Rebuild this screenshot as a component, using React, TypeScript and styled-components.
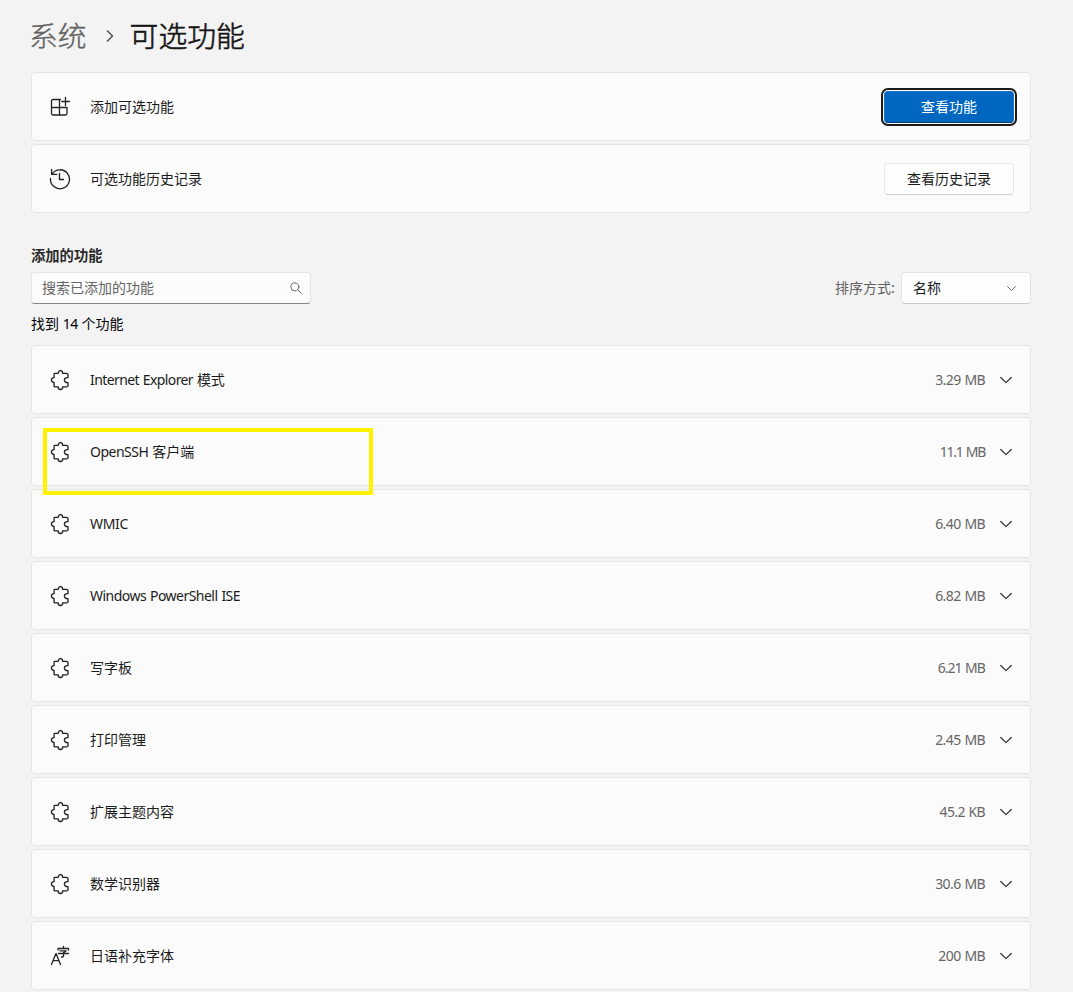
import React from "react";
import styled, { createGlobalStyle } from "styled-components";

const GlobalStyle = createGlobalStyle`
  * { box-sizing: border-box; }
  html, body { margin: 0; background: #f3f3f3; }
  body {
    height: 992px;
    overflow: hidden;
    font-family: "Noto Sans CJK SC", sans-serif;
    font-size: 14px;
    line-height: 20px;
    color: #1b1b1b;
  }
  button { font: inherit; }
`;

const Page = styled.main`
  width: 1031px;
  padding: 15px 0 0 31px;
`;

const Breadcrumb = styled.h1`
  display: flex;
  align-items: center;
  height: 40px;
  margin: 0 0 17px -2px;
  font-size: 28.8px;
  line-height: 40px;
  font-weight: 300;
`;

const Crumb = styled.span<{ $current?: boolean }>`
  color: ${(p) => (p.$current ? "#161616" : "#626262")};
  -webkit-text-stroke: ${(p) => (p.$current ? 0.6 : 0.35)}px currentColor;
`;

const CrumbArrow = styled.svg`
  width: 10px;
  height: 14px;
  margin: 2px 16px 0 17px;
`;

const Stack = styled.div`
  display: flex;
  flex-direction: column;
  gap: 3px;
`;

const Card = styled.section<{ $action?: boolean }>`
  display: flex;
  align-items: center;
  height: 69px;
  padding: 0 ${(p) => (p.$action ? 16 : 18)}px 0 18px;
  background: #fbfbfb;
  border: 1px solid #e5e5e5;
  border-radius: 4px;
`;

const CardIcon = styled.svg`
  width: 22px;
  height: 22px;
  margin: 0 19px 0 -1px;
  flex: none;
  fill: none;
  stroke: #222;
  stroke-width: 1.3;
  stroke-linecap: round;
  stroke-linejoin: round;
`;

const Label = styled.span<{ $raised?: boolean }>`
  flex: 1;
  padding-bottom: ${(p) => (p.$raised ? 2 : 0)}px;
  white-space: pre;
`;

const Latin = styled.span<{ $spacing?: number }>`
  font-family: "Noto Sans", "Open Sans", sans-serif;
  font-size: 14px;
  letter-spacing: ${(p) => p.$spacing ?? -0.6}px;
  word-spacing: 0.8px;
`;

const Size = styled(Latin)`
  margin-right: 15px;
  color: #666;
`;

const Button = styled.button<{ $primary?: boolean }>`
  width: 130px;
  height: 32px;
  padding: 0 0 1px;
  border-radius: 4px;
  border: 1px solid ${(p) => (p.$primary ? "#1470c5" : "#e8e8e8")};
  border-bottom-color: ${(p) => (p.$primary ? "#003e73" : "#cfcfcf")};
  background: ${(p) => (p.$primary ? "#0067c0" : "#fefefe")};
  color: ${(p) => (p.$primary ? "#fff" : "#1b1b1b")};
  box-shadow: ${(p) => (p.$primary ? "0 0 0 1px #fff, 0 0 0 3px #1a1a1a" : "none")};
`;

const Heading = styled.h2`
  margin: 32px 0 7px;
  font-size: 14.3px;
  line-height: 20px;
  font-weight: 700;
  color: #2b2b2b;
`;

const Toolbar = styled.div`
  display: flex;
  justify-content: space-between;
  height: 32px;
`;

const Search = styled.div`
  display: flex;
  align-items: center;
  justify-content: space-between;
  width: 280px;
  padding: 0 8px 1px 10px;
  background: #fcfcfc;
  border: 1px solid #e5e5e5;
  border-bottom-color: #868686;
  border-radius: 4px;
  color: #646464;
`;

const FieldText = styled.span`
  padding-bottom: 2px;
`;

const Sort = styled.div`
  display: flex;
  align-items: center;
  gap: 6px;
  color: #616161;
`;

const Select = styled.div`
  display: flex;
  align-items: center;
  justify-content: space-between;
  width: 130px;
  height: 32px;
  padding: 0 14px 0 11px;
  background: #fdfdfd;
  border: 1px solid #e5e5e5;
  border-bottom-color: #cccccc;
  border-radius: 4px;
  color: #1b1b1b;
`;

const Count = styled.p`
  height: 20px;
  margin: 9px 0 12px;
  color: #000;
`;

const Highlight = styled.div`
  position: absolute;
  left: 43px;
  top: 428px;
  width: 330px;
  height: 67px;
  border: 4px solid #fff200;
  border-radius: 1px;
`;

const Chevron = ({ size = 12, color = "#333" }: { size?: number; color?: string }) => (
  <svg width={size} height={size} viewBox="0 0 12 12" fill="none" stroke={color} strokeWidth="1.2" strokeLinecap="round" strokeLinejoin="round">
    <path d="M.8 3.5 6 8.7l5.2-5.2" />
  </svg>
);

const AddIcon = () => (
  <CardIcon viewBox="0 0 22 22">
    <path d="M11.5 3.5H4A1.5 1.5 0 0 0 2.5 5v12.5A1.5 1.5 0 0 0 4 19h12.5a1.5 1.5 0 0 0 1.5-1.5v-6H2.5M10.5 3.5V19M16.5 1.5v8M12.8 5.5h7.7" />
  </CardIcon>
);

const HistoryIcon = () => (
  <CardIcon viewBox="0 0 22 22">
    <path d="M2.6 1.3v5.1h5.2M3 6.1A9.5 9.5 0 1 1 1.5 10.5M10.5 5.5v6h4" />
  </CardIcon>
);

const PuzzleIcon = () => (
  <CardIcon viewBox="0 0 22 22">
    <path d="M5.7 4.3H9.2C9.2 2.6 10.2 1.7 11.4 1.7S13.6 2.6 13.6 4.3H17.6Q19 4.3 19 5.7V8.6C16.9 8.3 15.4 9.4 15.4 11.1S16.9 13.9 19 13.6V16.5Q19 17.9 17.6 17.9H13.6C13.6 19.5 12.6 20.5 11.4 20.5S9.2 19.5 9.2 17.9H5.7Q5.1 17.9 5.1 17.3V13.5C3.4 13.5 2.4 12.5 2.4 11.1S3.4 8.7 5.1 8.7V4.9Q5.1 4.3 5.7 4.3Z" />
  </CardIcon>
);

const FontIcon = () => (
  <CardIcon viewBox="0 0 22 22">
    <path d="M2.5 19.5 6.8 8.7h.4l4.3 10.8M4 15.7h6M9 5V3.5h10.5V5M14.5 1.5v2M11 5.8h6.2l-2.7 2v3.4q0 .8-1 .8h-1M9.5 8.5h10" />
  </CardIcon>
);

type Feature = { latin?: string; cjk?: string; spacing?: number; size: string; sizeSpacing?: number; font?: boolean };

const features: Feature[] = [
  { latin: "Internet Explorer ", cjk: "模式", spacing: -0.6, size: "3.29 MB" },
  { latin: "OpenSSH ", cjk: "客户端", spacing: -0.5, size: "11.1 MB", sizeSpacing: -1.25 },
  { latin: "WMIC", spacing: -0.3, size: "6.40 MB" },
  { latin: "Windows PowerShell ISE", spacing: -0.53, size: "6.82 MB" },
  { cjk: "写字板", size: "6.21 MB", sizeSpacing: -0.95 },
  { cjk: "打印管理", size: "2.45 MB" },
  { cjk: "扩展主题内容", size: "45.2 KB", sizeSpacing: -0.65 },
  { cjk: "数学识别器", size: "30.6 MB" },
  { cjk: "日语补充字体", size: "200 MB", font: true },
];

export default function App() {
  return (
    <>
      <GlobalStyle />
      <Page>
        <Breadcrumb>
          <Crumb>系统</Crumb>
          <CrumbArrow viewBox="0 0 10 14" fill="none" stroke="#555" strokeWidth="1.6" strokeLinecap="round" strokeLinejoin="round">
            <path d="m3.5 2 5 5-5 5" />
          </CrumbArrow>
          <Crumb $current>可选功能</Crumb>
        </Breadcrumb>
        <Stack>
          <Card $action>
            <AddIcon />
            <Label $raised>添加可选功能</Label>
            <Button $primary>查看功能</Button>
          </Card>
          <Card $action>
            <HistoryIcon />
            <Label $raised>可选功能历史记录</Label>
            <Button>查看历史记录</Button>
          </Card>
        </Stack>
        <Heading>添加的功能</Heading>
        <Toolbar>
          <Search>
            <FieldText>搜索已添加的功能</FieldText>
            <svg width="12" height="12" viewBox="0 0 12 12" fill="none" stroke="#6a6a6a" strokeWidth="1" strokeLinecap="round">
              <circle cx="4.9" cy="4.9" r="4" />
              <path d="m7.9 7.9 3.4 3.4" />
            </svg>
          </Search>
          <Sort>
            <FieldText>排序方式:</FieldText>
            <Select>
              <FieldText>名称</FieldText>
              <Chevron size={9} color="#555" />
            </Select>
          </Sort>
        </Toolbar>
        <Count>
          找到<Latin> 14 </Latin>个功能
        </Count>
        <Stack>
          {features.map((f) => (
            <Card key={f.latin ?? f.cjk}>
              {f.font ? <FontIcon /> : <PuzzleIcon />}
              <Label $raised={!f.latin}>
                {f.latin && <Latin $spacing={f.spacing}>{f.latin}</Latin>}
                {f.cjk}
              </Label>
              <Size $spacing={f.sizeSpacing}>{f.size}</Size>
              <Chevron />
            </Card>
          ))}
        </Stack>
      </Page>
      <Highlight />
    </>
  );
}
